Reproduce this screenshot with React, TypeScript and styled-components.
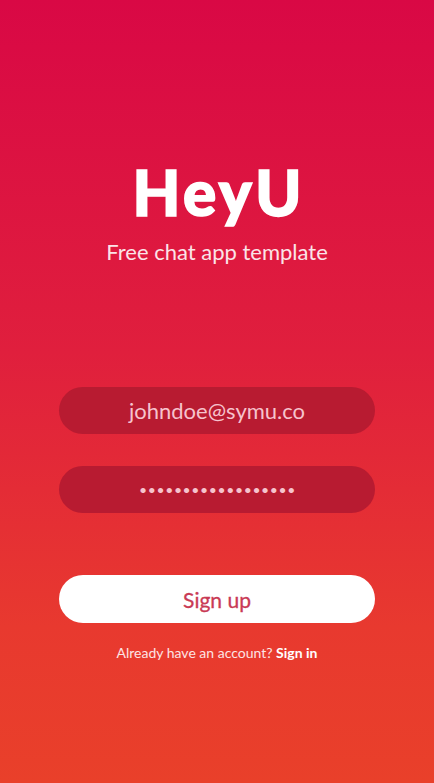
import React from "react";
import styled, { createGlobalStyle } from "styled-components";

const Global = createGlobalStyle`
  html, body { margin: 0; padding: 0; }
  body { font-family: Lato, "Open Sans", sans-serif; }
`;

const Screen = styled.div`
  width: 434px;
  height: 783px;
  box-sizing: border-box;
  background: linear-gradient(180deg, #d90845 0%, #e01f3d 45%, #e8392f 80%, #e9402a 100%);
  display: flex;
  flex-direction: column;
  align-items: center;
  padding-top: 156px;
`;

const Title = styled.h1`
  margin: 0;
  font-family: Lato, sans-serif;
  font-weight: 900;
  font-size: 62px;
  line-height: 72px;
  color: #ffffff;
  -webkit-text-stroke: 1.6px #ffffff;
  letter-spacing: 3.5px;
  padding-left: 3.5px;
`;

const Subtitle = styled.p`
  margin: 10px 0 0;
  font-family: Lato, sans-serif;
  font-weight: 400;
  font-size: 22px;
  line-height: 28px;
  color: #fbe3e8;
`;

const Form = styled.div`
  margin-top: 121px;
  width: 316px;
  display: flex;
  flex-direction: column;
  gap: 32px;
`;

const Field = styled.div<{ $dots?: boolean }>`
  height: 47px;
  border-radius: 24px;
  background: #b81b31;
  display: flex;
  align-items: center;
  justify-content: center;
  font-family: Lato, sans-serif;
  font-size: ${(p) => (p.$dots ? "14px" : "22px")};
  color: #f6c3cd;
  letter-spacing: ${(p) => (p.$dots ? "0.6px" : "0")};
  padding-left: ${(p) => (p.$dots ? "1px" : "0")};
`;

const Button = styled.div`
  margin-top: 62px;
  width: 316px;
  height: 48px;
  border-radius: 24px;
  background: #ffffff;
  display: flex;
  align-items: center;
  justify-content: center;
  font-family: Lato, sans-serif;
  font-size: 21px;
  color: #c93a55;
  -webkit-text-stroke: 0.3px #c93a55;
`;

const Footer = styled.p`
  margin: 21px 0 0;
  font-family: Lato, sans-serif;
  font-size: 14px;
  color: #fde4e4;
`;

const Strong = styled.span`
  font-weight: 700;
  color: #ffffff;
`;

export default function App() {
  return (
    <>
      <Global />
      <Screen>
        <Title>HeyU</Title>
        <Subtitle>Free chat app template</Subtitle>
        <Form>
          <Field>johndoe@symu.co</Field>
          <Field $dots>••••••••••••••••••</Field>
        </Form>
        <Button>Sign up</Button>
        <Footer>
          Already have an account? <Strong>Sign in</Strong>
        </Footer>
      </Screen>
    </>
  );
}
